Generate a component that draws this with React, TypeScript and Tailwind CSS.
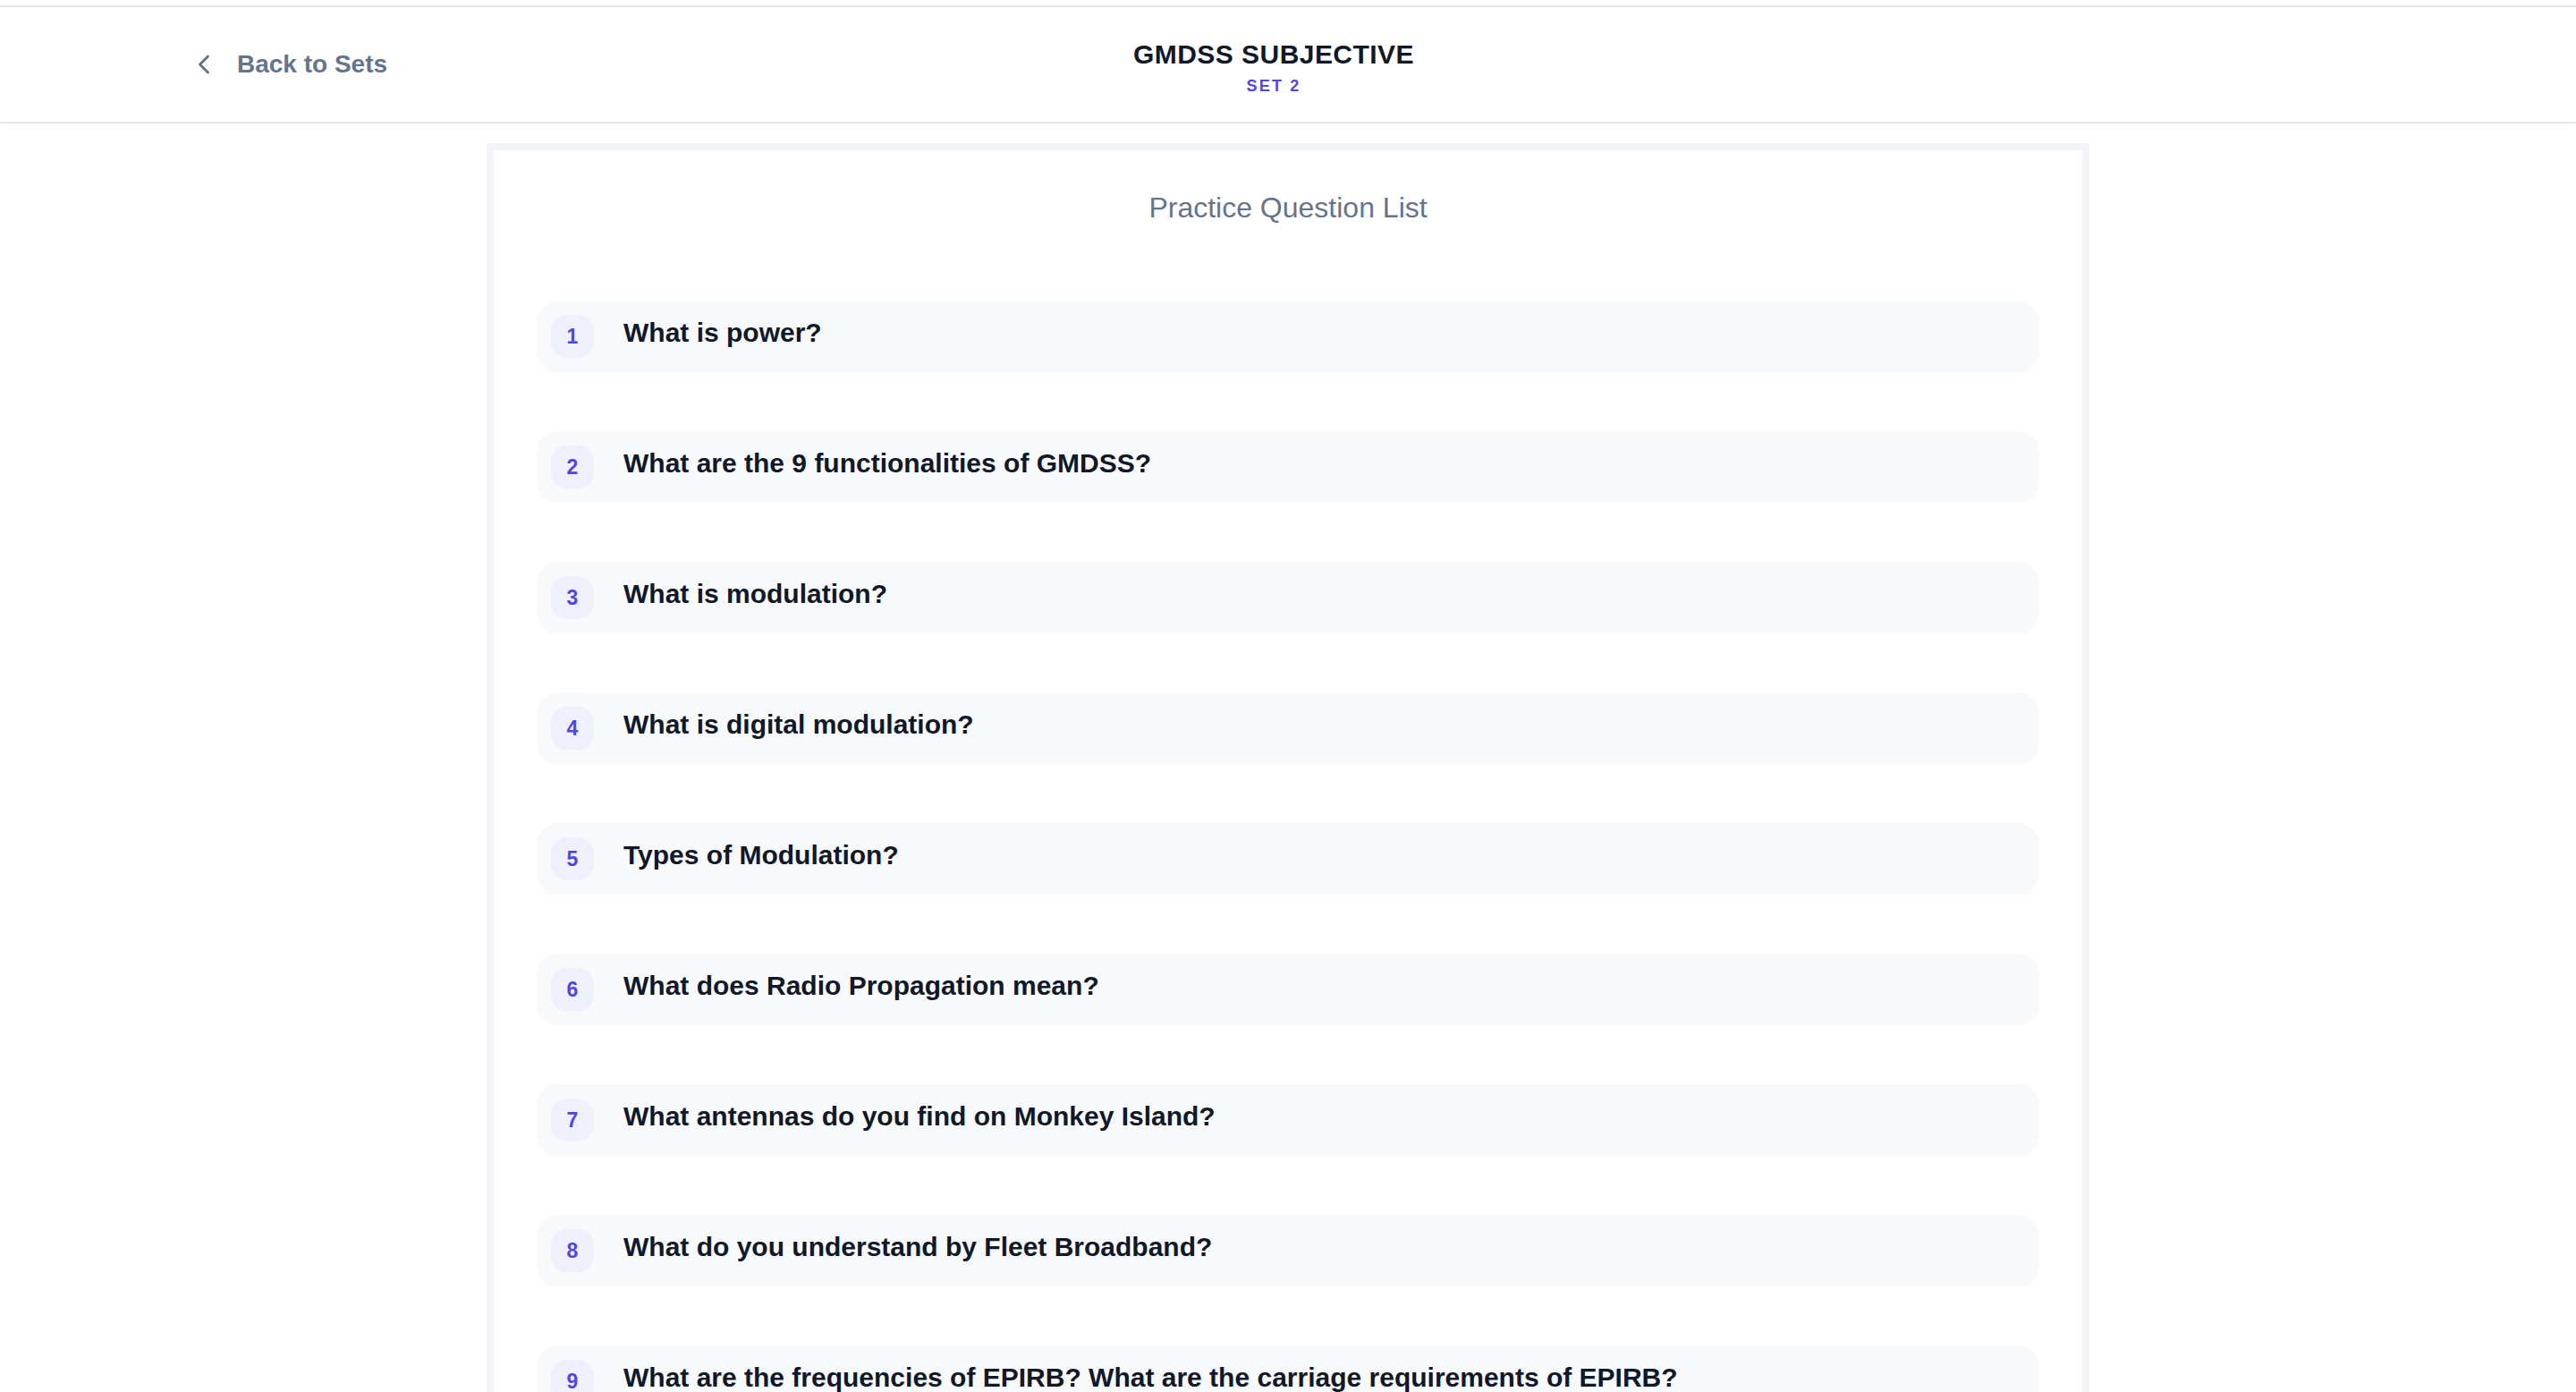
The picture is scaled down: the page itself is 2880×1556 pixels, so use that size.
import { ChevronLeft } from 'lucide-react';

const questions: string[] = [
  'What is power?',
  'What are the 9 functionalities of GMDSS?',
  'What is modulation?',
  'What is digital modulation?',
  'Types of Modulation?',
  'What does Radio Propagation mean?',
  'What antennas do you find on Monkey Island?',
  'What do you understand by Fleet Broadband?',
  'What are the frequencies of EPIRB? What are the carriage requirements of EPIRB?',
];

function Header() {
  return (
    <header className="h-[130px] border-b-2 border-[#e6e7ea] bg-white shadow-[0_2px_3px_rgba(0,0,0,0.025)]">
      <div className="flex h-full items-center px-[210px]">
        <div className="flex flex-1">
          <button className="flex items-center gap-[19px] text-[#64748b]">
            <ChevronLeft size={36} strokeWidth={2} />
            <span className="text-[28px] font-bold leading-[40px]">Back to Sets</span>
          </button>
        </div>
        <div className="mt-[6px] flex flex-col items-center">
          <h1 className="text-[30px] font-bold leading-[36px] tracking-[0.015em] text-[#111827]">
            GMDSS SUBJECTIVE
          </h1>
          <span className="mt-[5px] text-[18px] font-bold uppercase leading-[24px] tracking-[0.12em] text-[#4f46e5]">
            Set 2
          </span>
        </div>
        <div className="flex-1 pl-[32px]" />
      </div>
    </header>
  );
}

function QuestionRow({ index, text }: { index: number; text: string }) {
  return (
    <div className="flex h-[80px] items-start gap-[33px] rounded-[24px] bg-[#f8f9fb] px-4 py-4 shadow-[0_1px_3px_rgba(0,0,0,0.02)]">
      <div className="flex h-[48px] w-[48px] shrink-0 items-center justify-center rounded-[18px] bg-[#eef0fc] text-[23px] font-bold text-[#4f46e5]">
        {index}
      </div>
      <p className="text-[30px] font-bold leading-[40px] text-[#111827]">{text}</p>
    </div>
  );
}

export default function App() {
  return (
    <div className="min-h-screen bg-white font-['Liberation_Sans',Arial,sans-serif]">
      <div className="h-[6px]" />
      <div className="h-[2px] bg-[#e6e7ea]" />
      <Header />

      <main className="mt-[22px] px-4">
        <div className="mx-auto max-w-[1792px] border-8 border-[#f2f4f7] bg-white px-12 pb-12 pt-[40px]">
          <h2 className="text-center text-[32px] font-normal leading-[48px] text-[#64748b]">
            Practice Question List
          </h2>
          <div className="mt-[80px] flex flex-col gap-[66px]">
            {questions.map((q, i) => (
              <QuestionRow key={i} index={i + 1} text={q} />
            ))}
          </div>
        </div>
      </main>
    </div>
  );
}
